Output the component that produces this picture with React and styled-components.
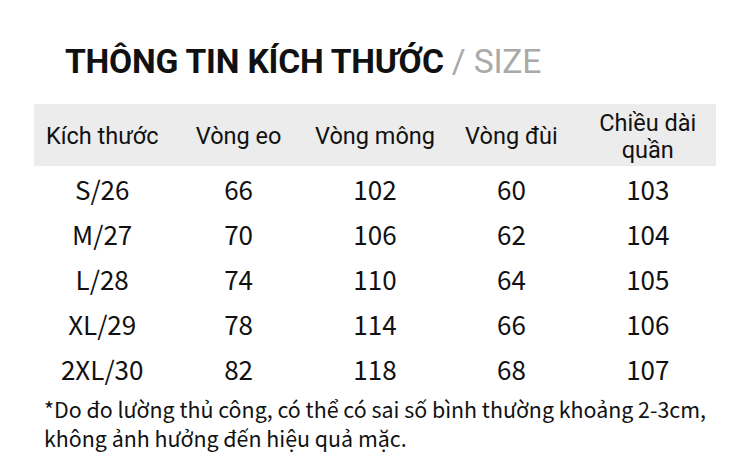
import React from 'react';
import styled, { createGlobalStyle } from 'styled-components';

const GlobalStyle = createGlobalStyle`
  html, body {
    margin: 0;
    padding: 0;
    background: #fff;
  }
`;

const Page = styled.section`
  width: 750px;
  height: 466px;
  box-sizing: border-box;
  padding: 37px 34px 0 34px;
  display: flex;
  flex-direction: column;
  color: #111;
`;

const Title = styled.h1`
  margin: 0 0 0 31px;
  font-family: Roboto, "Liberation Sans", sans-serif;
  font-weight: 700;
  font-size: 33.6px;
  line-height: 50px;
  letter-spacing: -0.2px;
  color: #111;
`;

const Sub = styled.span`
  font-weight: 400;
  color: #a9a9a9;
`;

const Table = styled.div`
  margin-top: 17px;
  display: grid;
  grid-template-columns: repeat(5, 1fr);
`;

const HeadRow = styled.div`
  display: contents;
`;

const HeadCell = styled.div`
  background: #ececec;
  height: 62px;
  box-sizing: border-box;
  padding-top: 3px;
  display: flex;
  align-items: center;
  justify-content: center;
  text-align: center;
  font-family: Roboto, "Liberation Sans", sans-serif;
  font-size: 23.5px;
  line-height: 27px;
  color: #111;
`;

const Cell = styled.div`
  height: 45px;
  display: flex;
  align-items: center;
  justify-content: center;
  font-family: "Noto Sans CJK JP", "Noto Sans", sans-serif;
  font-size: 26px;
  color: #111;
`;

const Note = styled.p`
  margin: 3px 0 0 10px;
  font-family: "Noto Sans CJK JP", "Noto Sans", sans-serif;
  font-size: 21.4px;
  line-height: 29px;
  color: #111;
`;

const headers = ['Kích thước', 'Vòng eo', 'Vòng mông', 'Vòng đùi', 'Chiều dài quần'];

const rows = [
  ['S/26', 66, 102, 60, 103],
  ['M/27', 70, 106, 62, 104],
  ['L/28', 74, 110, 64, 105],
  ['XL/29', 78, 114, 66, 106],
  ['2XL/30', 82, 118, 68, 107],
];

const App = () => {
  return (
    <>
      <GlobalStyle />
      <Page>
        <Title>
          THÔNG TIN KÍCH THƯỚC <Sub>/ SIZE</Sub>
        </Title>
        <Table>
          <HeadRow>
            {headers.map((h) => (
              <HeadCell key={h}>
                {h === 'Chiều dài quần' ? (<span>Chiều dài<br />quần</span>) : h}
              </HeadCell>
            ))}
          </HeadRow>
          {rows.map((r) => r.map((v, i) => (
            <Cell key={r[0] + i}>{v}</Cell>
          )))}
        </Table>
        <Note>
          *Do đo lường thủ công, có thể có sai số bình thường khoảng 2-3cm,<br />
          không ảnh hưởng đến hiệu quả mặc.
        </Note>
      </Page>
    </>
  );
};

export default App;
